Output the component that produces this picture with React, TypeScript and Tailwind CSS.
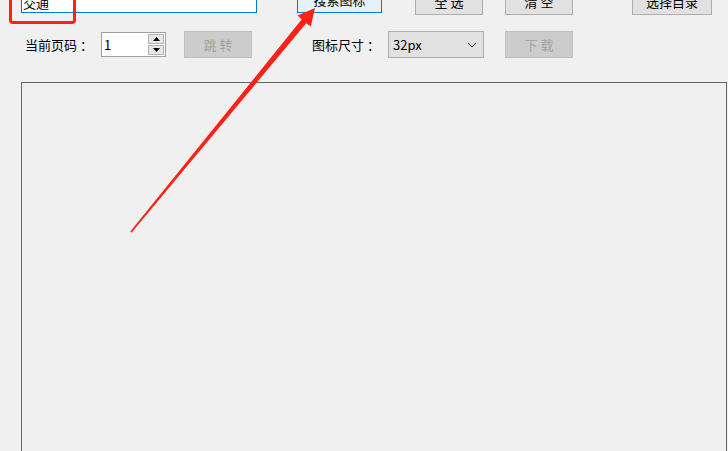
import { ReactNode } from 'react'

const font = { fontFamily: '"Microsoft YaHei", "Noto Sans CJK SC", "Noto Sans", sans-serif' }

function Btn({ children, disabled, className = '' }: { children: ReactNode; disabled?: boolean; className?: string }) {
  return (
    <div
      className={
        'flex items-center justify-center h-[27px] border text-[13px] leading-none ' +
        (disabled ? 'bg-[#cccccc] border-[#bfbfbf] text-[#a3a3a3] ' : 'bg-[#e1e1e1] border-[#adadad] text-black ') +
        className
      }
    >
      {children}
    </div>
  )
}

function Arrow() {
  return (
    <svg className="absolute inset-0 pointer-events-none" width="728" height="451" viewBox="0 0 728 451">
      {/* tapered shaft + head, tail near (131,232), tip near (315,8) */}
      <polygon
        points="130.3,231.5 301.6,19.6 297.6,15.6 315,8 310.8,26.4 306.2,23.2 131.7,232.5"
        fill="#ff2115"
      />
    </svg>
  )
}

export default function App() {
  return (
    <div className="relative w-[728px] h-[451px] overflow-hidden bg-[#f0f0f0]" style={font}>
      {/* top row, partly scrolled off */}
      <div className="flex items-start pl-[21px] -mt-[14px]">
        <div className="w-[236px] h-[27px] bg-white border border-[#0078d7] flex items-end pl-[1px] pb-[3px] text-[13px] leading-none text-black">
          交通
        </div>
        <div className="ml-[40px] w-[85px] h-[27px] bg-[#e5f1fb] border border-[#0078d7] flex items-center justify-center text-[13px] leading-none">
          搜索图标
        </div>
        <Btn className="ml-[33px] w-[68px] mt-[2px]">全 选</Btn>
        <Btn className="ml-[22px] w-[68px] mt-[2px]">清 空</Btn>
        <Btn className="ml-[59px] w-[80px] mt-[2px]">选择目录</Btn>
      </div>

      {/* second row */}
      <div className="flex items-center pl-[21px] mt-[16px] h-[27px]">
        <span className="ml-[4px] w-[76px] text-[13px] leading-none text-black whitespace-nowrap">当前页码 ：</span>
        <div className="w-[65px] h-[25px] bg-white border border-[#a0a0a0] flex items-stretch">
          <span className="flex-1 pl-[2px] flex items-center text-[13px] leading-none">1</span>
          <div className="w-[16px] my-[1px] mr-[1px] flex flex-col gap-[1px]">
            <div className="flex-1 bg-[#e6e6e6] border border-[#b4b4b4] flex items-center justify-center">
              <svg width="7" height="4" viewBox="0 0 7 4"><polygon points="0,4 3.5,0 7,4" fill="#000" /></svg>
            </div>
            <div className="flex-1 bg-[#e6e6e6] border border-[#b4b4b4] flex items-center justify-center">
              <svg width="7" height="4" viewBox="0 0 7 4"><polygon points="0,0 7,0 3.5,4" fill="#000" /></svg>
            </div>
          </div>
        </div>
        <Btn disabled className="ml-[18px] w-[68px]">跳 转</Btn>
        <span className="ml-[60px] w-[76px] text-[13px] leading-none text-black whitespace-nowrap">图标尺寸 ：</span>
        <div className="w-[96px] h-[27px] bg-[#e1e1e1] border border-[#adadad] flex items-center justify-between pl-[4px] pr-[6px] text-[13px] leading-none text-black">
          <span>32px</span>
          <svg width="10" height="6" viewBox="0 0 10 6">
            <polyline points="1,1 5,5 9,1" fill="none" stroke="#333" strokeWidth="1" />
          </svg>
        </div>
        <Btn disabled className="ml-[21px] w-[68px]">下 载</Btn>
      </div>

      {/* icon panel */}
      <div className="ml-[21px] mt-[24px] w-[706px] h-[420px] border border-[#646464]" />

      {/* annotation overlays */}
      <div className="absolute left-[9px] -top-[10px] w-[67px] h-[34px] border-[3px] border-[#ff2115] rounded-[4px] pointer-events-none" />
      <Arrow />
    </div>
  )
}
